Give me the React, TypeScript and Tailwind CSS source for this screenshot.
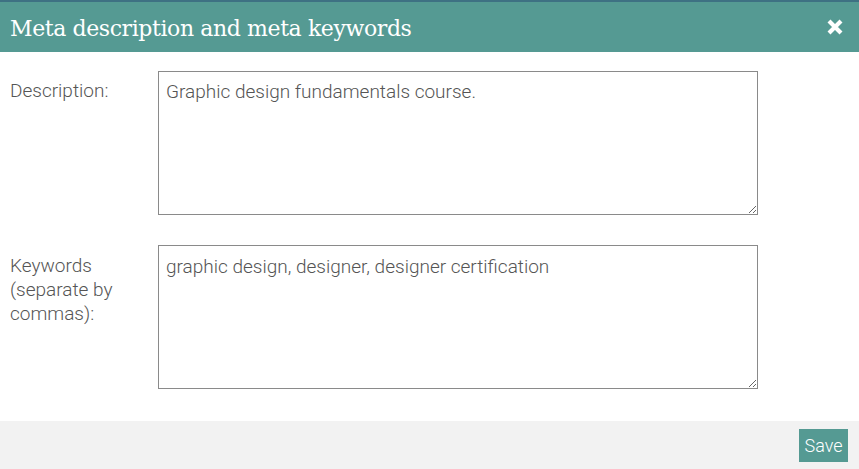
import React, { useState } from 'react';

const App: React.FC = () => {
  const [description, setDescription] = useState('Graphic design fundamentals course.');
  const [keywords, setKeywords] = useState('graphic design, designer, designer certification');

  return (
    <div className="w-[859px] h-[469px] bg-white flex flex-col overflow-hidden font-['Roboto',sans-serif]">
      <div className="h-[52px] bg-[#559a93] border-t-2 border-[#3e7183] flex items-center justify-between pl-[10px] pr-[15px]">
        <h1 className="text-white text-[22px] font-['Roboto_Slab','DejaVu_Serif',serif] tracking-[-0.4px] leading-none pt-[3px]">
          Meta description and meta keywords
        </h1>
        <button className="text-white">
          <svg width="18" height="18" viewBox="0 0 18 18">
            <path d="M3 3 L15 15 M15 3 L3 15" stroke="white" strokeWidth="4.2" strokeLinecap="butt" />
          </svg>
        </button>
      </div>

      <div className="flex-1 flex flex-col gap-[30px] pt-[19px] pl-[10px]">
        <div className="flex">
          <label className="w-[148px] pt-[8px] text-[19px] font-light text-[#555] leading-[24px]">Description:</label>
          <textarea
            value={description}
            onChange={e => setDescription(e.target.value)}
            className="w-[600px] h-[144px] border border-[#8a8a8a] px-[7px] pt-[8px] text-[19px] font-light text-[#555] leading-[24px] outline-none resize-y"
          />
        </div>
        <div className="flex">
          <label className="w-[148px] pt-[9px] text-[19px] font-light text-[#555] leading-[24px]">
            Keywords<br />(separate by<br />commas):
          </label>
          <textarea
            value={keywords}
            onChange={e => setKeywords(e.target.value)}
            className="w-[600px] h-[144px] border border-[#8a8a8a] px-[7px] pt-[9px] text-[19px] font-light text-[#555] leading-[24px] outline-none resize-y"
          />
        </div>
      </div>

      <div className="h-[48px] bg-[#f2f2f2] flex items-center justify-end pr-[11px]">
        <button className="h-[33px] w-[49px] bg-[#559a93] text-white text-[18px] font-light">Save</button>
      </div>
    </div>
  );
};

export default App;
